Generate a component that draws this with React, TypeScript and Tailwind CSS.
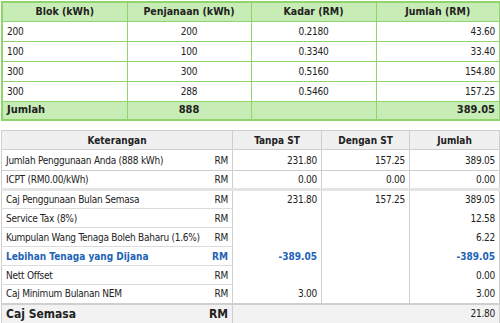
import React from "react";

const blocks = [
  { blok: "200", jana: "200", kadar: "0.2180", jumlah: "43.60" },
  { blok: "100", jana: "100", kadar: "0.3340", jumlah: "33.40" },
  { blok: "300", jana: "300", kadar: "0.5160", jumlah: "154.80" },
  { blok: "300", jana: "288", kadar: "0.5460", jumlah: "157.25" },
];

const font = { fontFamily: '"DejaVu Sans Condensed", "DejaVu Sans", Tahoma, sans-serif' };

const gTh = "border border-[#8fd46c] px-1 h-[19px] font-bold text-center text-[10.5px] tracking-normal";
const gTd = "border border-[#8fd46c] px-1 h-[19px]";

const rows = [
  { label: "Caj Penggunaan Bulan Semasa", tanpa: "231.80", dengan: "157.25", jumlah: "389.05" },
  { label: "Service Tax (8%)", tanpa: "", dengan: "", jumlah: "12.58" },
  { label: "Kumpulan Wang Tenaga Boleh Baharu (1.6%)", tanpa: "", dengan: "", jumlah: "6.22" },
  { label: "Lebihan Tenaga yang Dijana", tanpa: "-389.05", dengan: "", jumlah: "-389.05", blue: true },
  { label: "Nett Offset", tanpa: "", dengan: "", jumlah: "0.00" },
  { label: "Caj Minimum Bulanan NEM", tanpa: "3.00", dengan: "", jumlah: "3.00" },
];

export default function App() {
  return (
    <div className="w-[500px] h-[323px] bg-white text-[10px] tracking-[-0.25px] text-[#222] overflow-hidden pt-[1px] px-[1px]" style={font}>
      {/* block table */}
      <table className="w-[498px] table-fixed border-collapse border-2 border-[#8fd46c]">
        <colgroup>
          <col className="w-[125px]" />
          <col className="w-[124px]" />
          <col className="w-[125px]" />
          <col className="w-[124px]" />
        </colgroup>
        <thead>
          <tr className="bg-[#c8ecb6]">
            <th className={gTh}>Blok (kWh)</th>
            <th className={gTh}>Penjanaan (kWh)</th>
            <th className={gTh}>Kadar (RM)</th>
            <th className={gTh}>Jumlah (RM)</th>
          </tr>
        </thead>
        <tbody>
          {blocks.map((b, i) => (
            <tr key={i} className="h-[20px]">
              <td className={gTd}>{b.blok}</td>
              <td className={`${gTd} text-center`}>{b.jana}</td>
              <td className={`${gTd} text-center`}>{b.kadar}</td>
              <td className={`${gTd} text-right`}>{b.jumlah}</td>
            </tr>
          ))}
          <tr className="bg-[#c8ecb6] font-bold text-[11px] tracking-normal">
            <td className={gTd}>Jumlah</td>
            <td className={`${gTd} text-center`}>888</td>
            <td className={gTd}></td>
            <td className={`${gTd} text-right`}>389.05</td>
          </tr>
        </tbody>
      </table>

      {/* keterangan table */}
      <table className="mt-[9px] w-[498px] table-fixed border-collapse border border-[#cfcfcf]">
        <colgroup>
          <col className="w-[231px]" />
          <col className="w-[89px]" />
          <col className="w-[88px]" />
          <col className="w-[90px]" />
        </colgroup>
        <thead>
          <tr className="bg-[#f0f0f0] h-[19px] tracking-normal">
            <th className="border border-[#cfcfcf] font-bold text-center">Keterangan</th>
            <th className="border border-[#cfcfcf] font-bold text-center">Tanpa ST</th>
            <th className="border border-[#cfcfcf] font-bold text-center">Dengan ST</th>
            <th className="border border-[#cfcfcf] font-bold text-center">Jumlah</th>
          </tr>
        </thead>
        <tbody>
          <tr className="h-[21px]">
            <td className="border border-[#cfcfcf] px-1">
              <div className="flex justify-between"><span>Jumlah Penggunaan Anda (888 kWh)</span><span>RM</span></div>
            </td>
            <td className="border border-[#cfcfcf] px-1 text-right">231.80</td>
            <td className="border border-[#cfcfcf] px-1 text-right">157.25</td>
            <td className="border border-[#cfcfcf] px-1 text-right">389.05</td>
          </tr>
          <tr className="h-[19px]">
            <td className="border-x border-[#cfcfcf] border-b-[3px] border-b-[#e4e4e4] px-1">
              <div className="flex justify-between"><span>ICPT (RM0.00/kWh)</span><span>RM</span></div>
            </td>
            <td className="border-x border-[#cfcfcf] border-b-[3px] border-b-[#e4e4e4] px-1 text-right">0.00</td>
            <td className="border-x border-[#cfcfcf] border-b-[3px] border-b-[#e4e4e4] px-1 text-right">0.00</td>
            <td className="border-x border-[#cfcfcf] border-b-[3px] border-b-[#e4e4e4] px-1 text-right">0.00</td>
          </tr>
          {rows.map((r, i) => (
            <tr key={i} className={`h-[19px] ${r.blue ? "text-[#1d63b8] font-bold tracking-normal" : ""}`}>
              <td className="border border-[#dcdcdc] border-x-[#cfcfcf] px-1">
                <div className="flex justify-between"><span>{r.label}</span><span>RM</span></div>
              </td>
              <td className="border-x border-[#cfcfcf] px-1 text-right">{r.tanpa}</td>
              <td className="border-x border-[#cfcfcf] px-1 text-right">{r.dengan}</td>
              <td className="border-x border-[#cfcfcf] px-1 text-right">{r.jumlah}</td>
            </tr>
          ))}
          <tr className="bg-[#f2f2f2] h-[20px] border-t-2 border-[#cfcfcf]">
            <td className="border border-[#cfcfcf] border-t-2 px-1 font-bold text-[12px] leading-[18px] tracking-normal">
              <div className="flex justify-between"><span>Caj Semasa</span><span>RM</span></div>
            </td>
            <td colSpan={3} className="border border-[#cfcfcf] border-t-2 px-1 text-right">21.80</td>
          </tr>
        </tbody>
      </table>
    </div>
  );
}
